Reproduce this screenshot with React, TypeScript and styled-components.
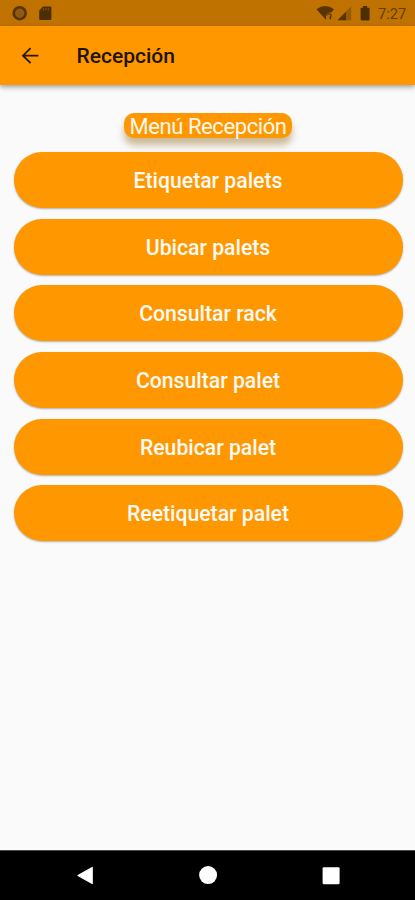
import React from "react";
import styled, { createGlobalStyle } from "styled-components";

const Global = createGlobalStyle`
  * { box-sizing: border-box; }
  body { margin: 0; background: #fafafa; font-family: Roboto, sans-serif; }
`;

const Screen = styled.div`
  width: 415px;
  height: 900px;
  display: flex;
  flex-direction: column;
  overflow: hidden;
  background: #fafafa;
`;

const StatusBar = styled.div`
  height: 26px;
  flex: none;
  display: flex;
  justify-content: space-between;
  padding: 0 8px 0 12px;
  background: #bf7200;
  color: #573400;
`;

const StatusGroup = styled.div`
  display: flex;
  align-items: center;
  svg { display: block; }
`;

const Clock = styled.span`
  width: 29px;
  font-size: 14.7px;
  line-height: 26px;
  padding-top: 1px;
  white-space: nowrap;
  color: #643c00;
`;

const AppBar = styled.header`
  height: 59px;
  flex: none;
  display: flex;
  align-items: center;
  padding: 1px 0 0 20px;
  background: #ff9800;
  box-shadow: 0 2px 4px rgba(0, 0, 0, 0.25), 0 3px 6px rgba(0, 0, 0, 0.12);
`;

const BackButton = styled.button`
  display: flex;
  width: 56.5px;
  padding: 0;
  border: 0;
  background: none;
`;

const Title = styled.h1`
  margin: 0;
  font-size: 21px;
  font-weight: 500;
  line-height: 28px;
  color: #201300;
`;

const Content = styled.main`
  flex: 1;
  display: flex;
  flex-direction: column;
  align-items: center;
  padding: 27.5px 12.5px 0 13.5px;
`;

const MenuLabel = styled.div`
  width: 168px;
  height: 25px;
  margin-bottom: 14.8px;
  border-radius: 10px;
  background: #ff9800;
  box-shadow: 0 7px 7px rgba(145, 105, 30, 0.45);
  color: #fff6ec;
  font-size: 22px;
  letter-spacing: -0.42px;
  line-height: 27px;
  text-align: center;
  white-space: nowrap;
`;

const MenuList = styled.nav`
  width: 100%;
  display: flex;
  flex-direction: column;
  gap: 10.6px;
`;

const MenuButton = styled.button`
  height: 56px;
  padding: 2px 0 0;
  border: 0;
  border-radius: 28px;
  background: #ff9800;
  box-shadow: 0 1px 2px rgba(0, 0, 0, 0.3);
  color: #fffaf5;
  font-family: inherit;
  font-size: 21.2px;
  font-weight: 500;
  line-height: 28px;
`;

const NavBar = styled.footer`
  height: 50px;
  flex: none;
  display: flex;
  justify-content: space-between;
  align-items: center;
  padding: 0 73px 0 75px;
  background: #000;
  border-top: 1px solid #4a4a4a;
  svg { display: block; }
`;

const options = [
  "Etiquetar palets",
  "Ubicar palets",
  "Consultar rack",
  "Consultar palet",
  "Reubicar palet",
  "Reetiquetar palet",
];

export default function App() {
  return (
    <>
      <Global />
      <Screen>
        <StatusBar>
          <StatusGroup>
            <svg width="44" height="26" viewBox="0 0 44 26">
              <circle cx="7.7" cy="13.2" r="6" fill="#8f5a12" stroke="#573400" strokeWidth="2.6" />
              <path d="M31 6.5h7.2q1.2 0 1.2 1.2v11q0 1.3-1.2 1.3H28.4q-1.2 0-1.2-1.2V10.4z" fill="#4d2e00" />
              <path d="M31.3 8v2.5M33.8 8v2.5M36.3 8v2.5" stroke="#80500f" strokeWidth="1.1" />
            </svg>
          </StatusGroup>
          <StatusGroup>
            <svg width="63" height="26" viewBox="315 0 63 26">
              <path d="M316.5 9.2q8.7-6.2 17.5 0l-2.6 3.4q-4.7-.4-5.3 4v3.4z" fill="#573400" />
              <path d="M327.5 15.4q.2-1.6 1.9-1.6t1.8 1.7q0 .9-1 1.5-.7.5-.7 1M330.4 17.2v2.3" fill="none" stroke="#573400" strokeWidth="1.3" />
              <path d="M351.2 6.5v13.8h-13.7z" fill="#965a00" />
              <path d="M346 11.8v8.5h-8.5z" fill="#573400" />
              <path d="M363 6h4.2v1.7h1.4q1 0 1 1v10.5q0 1.2-1.2 1.2h-6.6q-1.2 0-1.2-1.2V8.7q0-1 1-1h1.4z" fill="#4d2e00" />
            </svg>
            <Clock>7:27</Clock>
          </StatusGroup>
        </StatusBar>
        <AppBar>
          <BackButton aria-label="Volver">
            <svg width="20" height="20" viewBox="0 0 20 20" fill="none" stroke="#281800" strokeWidth="1.8">
              <path d="M18.4 9.7H3M10.6 2.2L3 9.7l7.6 7.3" />
            </svg>
          </BackButton>
          <Title>Recepción</Title>
        </AppBar>
        <Content>
          <MenuLabel>Menú Recepción</MenuLabel>
          <MenuList>
            {options.map((option) => (
              <MenuButton key={option}>{option}</MenuButton>
            ))}
          </MenuList>
        </Content>
        <NavBar>
          <svg width="20" height="20" viewBox="0 0 20 20">
            <path d="M17.2 1.4v16L3 9.5z" fill="#fff" stroke="#fff" strokeWidth="1.2" strokeLinejoin="round" />
          </svg>
          <svg width="20" height="20" viewBox="0 0 20 20">
            <circle cx="9.1" cy="9.1" r="9" fill="#fff" />
          </svg>
          <svg width="20" height="20" viewBox="0 0 20 20">
            <rect x="0.6" y="1.2" width="17" height="17" rx="1.3" fill="#fff" />
          </svg>
        </NavBar>
      </Screen>
    </>
  );
}
